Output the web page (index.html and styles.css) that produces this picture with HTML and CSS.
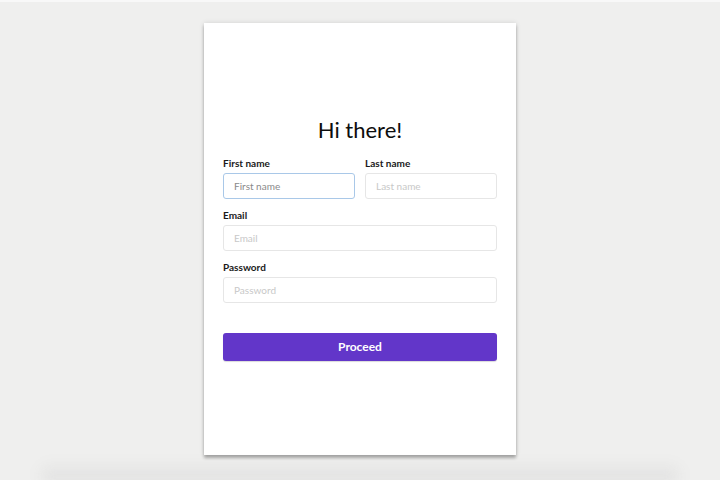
FILE: index.html
```html
<!DOCTYPE html>
<html lang="en">
<head>
<meta charset="utf-8">
<title>Hi there!</title>
<link rel="stylesheet" href="styles.css">
</head>
<body>
<div class="topline"></div>
<main class="stage">
  <form class="card">
    <h1 class="title">Hi there!</h1>
    <div class="row">
      <label class="field">
        <span class="label">First name</span>
        <input class="input input-focus" type="text" placeholder="First name">
      </label>
      <label class="field">
        <span class="label">Last name</span>
        <input class="input" type="text" placeholder="Last name">
      </label>
    </div>
    <label class="field">
      <span class="label">Email</span>
      <input class="input" type="email" placeholder="Email">
    </label>
    <label class="field">
      <span class="label">Password</span>
      <input class="input" type="password" placeholder="Password">
    </label>
    <button class="btn" type="button">Proceed</button>
  </form>
</main>
<div class="sheet"></div>
</body>
</html>
```
FILE: styles.css
```css
html, body {
  margin: 0;
  padding: 0;
  overflow: hidden;
  height: 100%;
}
body {
  background: #efefee;
  font-family: Lato, "Open Sans", sans-serif;
  color: #1a1a1a;
}
.topline {
  height: 2px;
  background: #f8f8f8;
}
.stage {
  display: flex;
  justify-content: center;
  padding-top: 21px;
}
.card {
  box-sizing: border-box;
  width: 312px;
  height: 432px;
  background: #fff;
  padding: 0 19px;
  display: flex;
  flex-direction: column;
  justify-content: center;
  gap: 10px;
  box-shadow: 0 3px 3px rgba(0,0,0,0.28), 0 0 5px rgba(0,0,0,0.12);
}
.title {
  margin: 0 0 5px;
  font-size: 22px;
  font-weight: 400;
  line-height: 24px;
  text-align: center;
  color: #0d0d0d;
}
.row {
  display: grid;
  grid-template-columns: 1fr 1fr;
  gap: 10px;
}
.field {
  display: flex;
  flex-direction: column;
  gap: 4px;
}
.label {
  font-size: 10px;
  font-weight: 700;
  line-height: 12px;
  color: #1a1a1a;
}
.input {
  box-sizing: border-box;
  height: 26px;
  width: 100%;
  border: 1px solid #e6e6e6;
  border-radius: 3px;
  padding: 0 10px;
  font-family: Lato, "Open Sans", sans-serif;
  font-size: 10px;
  color: #333;
  background: #fff;
  outline: none;
}
.input::placeholder {
  color: #c8c8c8;
}
.input-focus {
  border-color: #a9c8e8;
}
.input-focus::placeholder {
  color: #8a8a8a;
}
.btn {
  margin-top: 20px;
  height: 28px;
  border: none;
  border-radius: 3px;
  background: #6236c9;
  color: #fff;
  font-family: Lato, "Open Sans", sans-serif;
  font-size: 12px;
  font-weight: 700;
  box-shadow: 0 1px 1px rgba(0,0,0,0.15);
}
.sheet {
  margin: 19px auto 0;
  width: 630px;
  height: 6px;
  background: #e2e2e2;
  box-shadow: 0 -3px 16px 4px rgba(0,0,0,0.05);
  filter: blur(5px);
}
```
